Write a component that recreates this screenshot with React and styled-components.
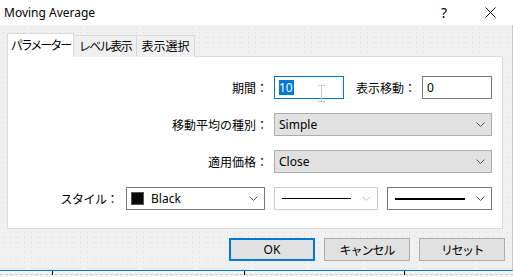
import React from 'react';
import styled, { createGlobalStyle } from 'styled-components';

const GlobalStyle = createGlobalStyle`
  html, body {
    margin: 0;
    padding: 0;
    background: #ffffff;
  }
  body {
    font-family: "Noto Sans", "Noto Sans CJK JP", sans-serif;
    font-size: 12px;
    color: #000000;
  }
`;

const Window = styled.div`
  width: 513px;
  height: 277px;
  display: flex;
  flex-direction: column;
  overflow: hidden;
  background: #ffffff;
`;

const TitleBar = styled.div`
  height: 25px;
  flex: none;
  display: flex;
  align-items: center;
  padding-left: 4px;
  background: #ffffff;
`;

const Title = styled.div`
  flex: 1;
  font-size: 12px;
  color: #000;
`;

const TitleButton = styled.div`
  width: 46px;
  height: 25px;
  display: flex;
  align-items: center;
  justify-content: center;
  font-size: 14px;
`;

const Body = styled.div`
  height: 246px;
  flex: none;
  box-sizing: border-box;
  padding: 8px 9px 0 7px;
  background-color: #f0f0f0;
  background-image: radial-gradient(circle, #dcdcdc 0.6px, transparent 0.9px);
  background-size: 7px 5px;
  border-right: 1px solid #c8c8c8;
  border-bottom: 1px solid #0078d7;
  display: flex;
  flex-direction: column;
`;

const TabRow = styled.div`
  display: flex;
  align-items: flex-end;
  height: 24px;
  margin-bottom: -1px;
`;

const Tab = styled.div`
  box-sizing: border-box;
  width: ${(p) => p.$w}px;
  height: ${(p) => (p.$active ? '24px' : '22px')};
  display: flex;
  align-items: center;
  justify-content: center;
  white-space: nowrap;
  letter-spacing: ${(p) => p.$ls || 0}px;
  background: ${(p) => (p.$active ? '#ffffff' : '#f0f0f0')};
  border: 1px solid #d9d9d9;
  border-bottom: none;
  position: relative;
  z-index: ${(p) => (p.$active ? 1 : 0)};
  margin-left: ${(p) => (p.$first ? '0' : '-1px')};
  font-size: 12px;
  padding-bottom: ${(p) => (p.$active ? '2px' : '1px')};
`;

const Panel = styled.div`
  height: 173px;
  box-sizing: border-box;
  background: #ffffff;
  border: 1px solid #d9d9d9;
  padding: 19px 10px 0 0;
  flex: none;
`;

const FormGrid = styled.div`
  display: grid;
  grid-template-columns: 1fr 218px;
  column-gap: 6px;
  row-gap: 14px;
`;

const Label = styled.div`
  justify-self: end;
  align-self: center;
  white-space: nowrap;
  font-size: 12px;
  color: #000;
`;

const ControlRow = styled.div`
  display: flex;
  align-items: center;
`;

const InlineLabel = styled.div`
  flex: 1;
  text-align: right;
  padding-right: 6px;
  white-space: nowrap;
`;

const InputBox = styled.div`
  position: relative;
  width: 70px;
  height: 23px;
  box-sizing: border-box;
  border: 1px solid ${(p) => (p.$focused ? '#0078d7' : '#7a7a7a')};
  background: #ffffff;
  display: flex;
  align-items: center;
  padding-left: 4px;
`;

const Selected = styled.span`
  background: #0078d7;
  color: #ffffff;
  line-height: 15px;
  padding-right: 1px;
`;

const Cursor = styled.svg`
  position: absolute;
  left: 43px;
  top: 8px;
`;

const Select = styled.div`
  box-sizing: border-box;
  width: ${(p) => p.$w || '218px'};
  height: 23px;
  border: 1px solid ${(p) => p.$border || '#adadad'};
  background: ${(p) => p.$bg || '#e1e1e1'};
  display: flex;
  align-items: center;
  padding: 0 6px 0 4px;
  gap: 7px;
  color: ${(p) => (p.$disabled ? '#a0a0a0' : '#000')};
`;

const SelectValue = styled.div`
  flex: 1;
  display: flex;
  align-items: center;
  gap: 7px;
  white-space: nowrap;
`;

const Swatch = styled.div`
  width: 13px;
  height: 13px;
  box-sizing: border-box;
  background: #0a0a0a;
  border: 1px solid #555;
`;

const LineSample = styled.div`
  flex: 1;
  margin: 0 4px 0 3px;
  height: ${(p) => p.$thick}px;
  background: #000;
`;

const StyleRow = styled.div`
  margin-top: 14px;
  display: flex;
  align-items: center;
  justify-content: flex-end;
  gap: 9px;
`;

const StyleLabel = styled.div`
  margin-right: -1px;
  letter-spacing: -0.5px;
  white-space: nowrap;
`;

const ButtonRow = styled.div`
  margin-top: 9px;
  margin-right: -2px;
  display: flex;
  justify-content: flex-end;
  gap: 9px;
`;

const Button = styled.div`
  box-sizing: border-box;
  width: 86px;
  height: 23px;
  display: flex;
  align-items: center;
  justify-content: center;
  background: #e1e1e1;
  border: ${(p) => (p.$default ? '2px solid #0078d7' : '1px solid #adadad')};
  font-size: 12px;
  letter-spacing: ${(p) => p.$ls || 0}px;
`;

const AxisStrip = styled.svg`
  display: block;
  flex: none;
`;

const Chevron = ({ color = '#505050' }) => (
  <svg width="9" height="5" viewBox="0 0 9 5">
    <polyline points="0.5,0.5 4.5,4.5 8.5,0.5" fill="none" stroke={color} strokeWidth="1" />
  </svg>
);

const App = () => (
  <Window>
    <GlobalStyle />
    <TitleBar>
      <Title>Moving Average</Title>
      <TitleButton>?</TitleButton>
      <TitleButton>
        <svg width="11" height="11" viewBox="0 0 11 11">
          <path d="M0.5 0.5 L10.5 10.5 M10.5 0.5 L0.5 10.5" stroke="#000" strokeWidth="1" />
        </svg>
      </TitleButton>
    </TitleBar>
    <Body>
      <TabRow>
        <Tab $active $first $w={67} $ls={-2}>パラメーター</Tab>
        <Tab $w={64} $ls={-1.5}>レベル表示</Tab>
        <Tab $w={59}>表示選択</Tab>
      </TabRow>
      <Panel>
        <FormGrid>
          <Label>期間：</Label>
          <ControlRow>
            <InputBox $focused>
              <Selected>10</Selected>
              <Cursor width="7" height="17" viewBox="0 0 7 17">
                <path d="M0 0.5 H7 M3.5 0.5 V16.5 M0 16.5 H7" stroke="#c8c8c8" strokeWidth="1" fill="none" />
              </Cursor>
            </InputBox>
            <InlineLabel>表示移動：</InlineLabel>
            <InputBox>0</InputBox>
          </ControlRow>
          <Label>移動平均の種別：</Label>
          <Select>
            <SelectValue>Simple</SelectValue>
            <Chevron />
          </Select>
          <Label>適用価格：</Label>
          <Select>
            <SelectValue>Close</SelectValue>
            <Chevron />
          </Select>
        </FormGrid>
        <StyleRow>
          <StyleLabel>スタイル：</StyleLabel>
          <Select $w="139px" $bg="#ffffff" $border="#7a7a7a">
            <SelectValue>
              <Swatch />
              Black
            </SelectValue>
            <Chevron />
          </Select>
          <Select $w="104px" $bg="#ffffff" $border="#cccccc" $disabled>
            <LineSample $thick={1} />
            <Chevron color="#c0c0c0" />
          </Select>
          <Select $w="105px" $bg="#ffffff" $border="#7a7a7a">
            <LineSample $thick={2} />
            <Chevron />
          </Select>
        </StyleRow>
      </Panel>
      <ButtonRow>
        <Button $default>OK</Button>
        <Button $ls={-1}>キャンセル</Button>
        <Button $ls={-1.5}>リセット</Button>
      </ButtonRow>
    </Body>
    <AxisStrip width="513" height="6" viewBox="0 0 513 6">
      <rect width="513" height="6" fill="#f4f4f4" />
      <line x1="0" y1="3.5" x2="513" y2="3.5" stroke="#c8c8c8" strokeDasharray="3 2" />
      <line x1="52.5" y1="0" x2="52.5" y2="4" stroke="#000" />
      <line x1="244.5" y1="0" x2="244.5" y2="4" stroke="#000" />
      <line x1="404.5" y1="0" x2="404.5" y2="4" stroke="#000" />
    </AxisStrip>
  </Window>
);

export default App;
